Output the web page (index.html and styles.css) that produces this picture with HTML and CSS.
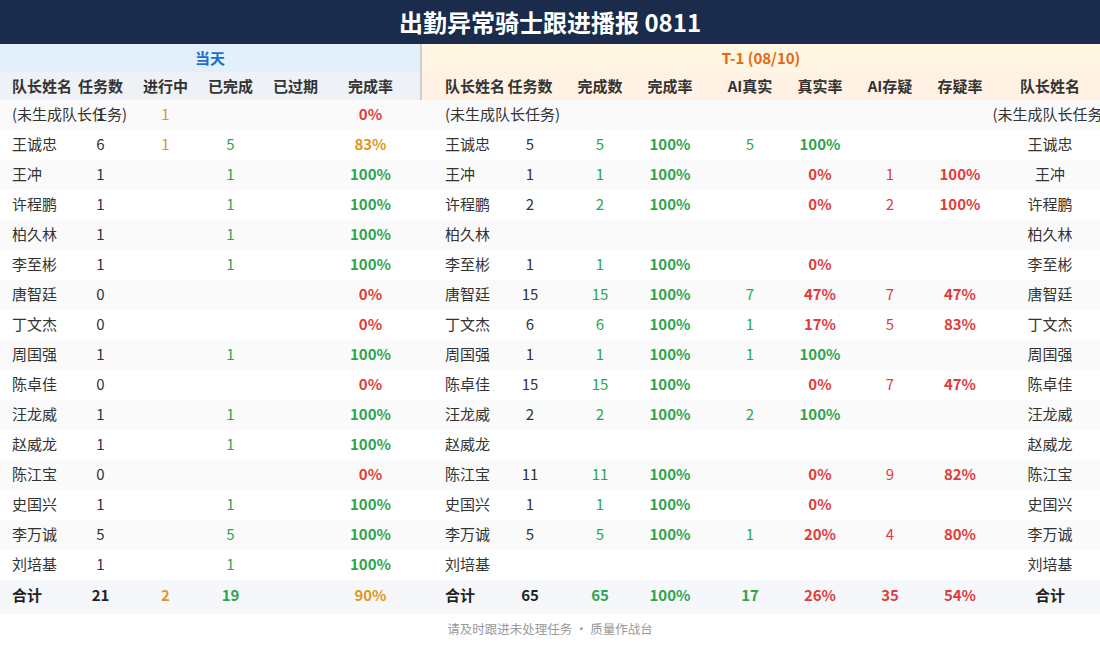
FILE: index.html
```html
<!DOCTYPE html>
<html lang="zh-CN">
<head>
<meta charset="utf-8">
<title>出勤异常骑士跟进播报 0811</title>
<link rel="stylesheet" href="styles.css">
</head>
<body>
<div class="board">
  <header class="title">出勤异常骑士跟进播报 0811</header>

  <div class="group">
    <div class="g-today">当天</div>
    <div class="g-prev">T-1 (08/10)</div>
  </div>

  <div class="row head">
    <span class="c nm">队长姓名</span><span class="c">任务数</span><span class="c">进行中</span><span class="c">已完成</span><span class="c">已过期</span><span class="c rate">完成率</span>
    <span class="c nm2 div">队长姓名</span><span class="c">任务数</span><span class="c">完成数</span><span class="c">完成率</span><span class="c">AI真实</span><span class="c">真实率</span><span class="c">AI存疑</span><span class="c">存疑率</span><span class="c">队长姓名</span>
  </div>

  <div class="row">
    <span class="c nm">(未生成队长任务)</span><span class="c">1</span><span class="c o">1</span><span class="c"></span><span class="c"></span><span class="c rate b r">0%</span>
    <span class="c nm2">(未生成队长任务)</span><span class="c"></span><span class="c"></span><span class="c"></span><span class="c"></span><span class="c"></span><span class="c"></span><span class="c"></span><span class="c">(未生成队长任务)</span>
  </div>
  <div class="row">
    <span class="c nm">王诚忠</span><span class="c">6</span><span class="c o">1</span><span class="c g">5</span><span class="c"></span><span class="c rate b o">83%</span>
    <span class="c nm2">王诚忠</span><span class="c">5</span><span class="c g">5</span><span class="c b g">100%</span><span class="c g">5</span><span class="c b g">100%</span><span class="c"></span><span class="c"></span><span class="c">王诚忠</span>
  </div>
  <div class="row">
    <span class="c nm">王冲</span><span class="c">1</span><span class="c"></span><span class="c g">1</span><span class="c"></span><span class="c rate b g">100%</span>
    <span class="c nm2">王冲</span><span class="c">1</span><span class="c g">1</span><span class="c b g">100%</span><span class="c"></span><span class="c b r">0%</span><span class="c r">1</span><span class="c b r">100%</span><span class="c">王冲</span>
  </div>
  <div class="row">
    <span class="c nm">许程鹏</span><span class="c">1</span><span class="c"></span><span class="c g">1</span><span class="c"></span><span class="c rate b g">100%</span>
    <span class="c nm2">许程鹏</span><span class="c">2</span><span class="c g">2</span><span class="c b g">100%</span><span class="c"></span><span class="c b r">0%</span><span class="c r">2</span><span class="c b r">100%</span><span class="c">许程鹏</span>
  </div>
  <div class="row">
    <span class="c nm">柏久林</span><span class="c">1</span><span class="c"></span><span class="c g">1</span><span class="c"></span><span class="c rate b g">100%</span>
    <span class="c nm2">柏久林</span><span class="c"></span><span class="c"></span><span class="c"></span><span class="c"></span><span class="c"></span><span class="c"></span><span class="c"></span><span class="c">柏久林</span>
  </div>
  <div class="row">
    <span class="c nm">李至彬</span><span class="c">1</span><span class="c"></span><span class="c g">1</span><span class="c"></span><span class="c rate b g">100%</span>
    <span class="c nm2">李至彬</span><span class="c">1</span><span class="c g">1</span><span class="c b g">100%</span><span class="c"></span><span class="c b r">0%</span><span class="c"></span><span class="c"></span><span class="c">李至彬</span>
  </div>
  <div class="row">
    <span class="c nm">唐智廷</span><span class="c">0</span><span class="c"></span><span class="c"></span><span class="c"></span><span class="c rate b r">0%</span>
    <span class="c nm2">唐智廷</span><span class="c">15</span><span class="c g">15</span><span class="c b g">100%</span><span class="c g">7</span><span class="c b r">47%</span><span class="c r">7</span><span class="c b r">47%</span><span class="c">唐智廷</span>
  </div>
  <div class="row">
    <span class="c nm">丁文杰</span><span class="c">0</span><span class="c"></span><span class="c"></span><span class="c"></span><span class="c rate b r">0%</span>
    <span class="c nm2">丁文杰</span><span class="c">6</span><span class="c g">6</span><span class="c b g">100%</span><span class="c g">1</span><span class="c b r">17%</span><span class="c r">5</span><span class="c b r">83%</span><span class="c">丁文杰</span>
  </div>
  <div class="row">
    <span class="c nm">周国强</span><span class="c">1</span><span class="c"></span><span class="c g">1</span><span class="c"></span><span class="c rate b g">100%</span>
    <span class="c nm2">周国强</span><span class="c">1</span><span class="c g">1</span><span class="c b g">100%</span><span class="c g">1</span><span class="c b g">100%</span><span class="c"></span><span class="c"></span><span class="c">周国强</span>
  </div>
  <div class="row">
    <span class="c nm">陈卓佳</span><span class="c">0</span><span class="c"></span><span class="c"></span><span class="c"></span><span class="c rate b r">0%</span>
    <span class="c nm2">陈卓佳</span><span class="c">15</span><span class="c g">15</span><span class="c b g">100%</span><span class="c"></span><span class="c b r">0%</span><span class="c r">7</span><span class="c b r">47%</span><span class="c">陈卓佳</span>
  </div>
  <div class="row">
    <span class="c nm">汪龙威</span><span class="c">1</span><span class="c"></span><span class="c g">1</span><span class="c"></span><span class="c rate b g">100%</span>
    <span class="c nm2">汪龙威</span><span class="c">2</span><span class="c g">2</span><span class="c b g">100%</span><span class="c g">2</span><span class="c b g">100%</span><span class="c"></span><span class="c"></span><span class="c">汪龙威</span>
  </div>
  <div class="row">
    <span class="c nm">赵威龙</span><span class="c">1</span><span class="c"></span><span class="c g">1</span><span class="c"></span><span class="c rate b g">100%</span>
    <span class="c nm2">赵威龙</span><span class="c"></span><span class="c"></span><span class="c"></span><span class="c"></span><span class="c"></span><span class="c"></span><span class="c"></span><span class="c">赵威龙</span>
  </div>
  <div class="row">
    <span class="c nm">陈江宝</span><span class="c">0</span><span class="c"></span><span class="c"></span><span class="c"></span><span class="c rate b r">0%</span>
    <span class="c nm2">陈江宝</span><span class="c">11</span><span class="c g">11</span><span class="c b g">100%</span><span class="c"></span><span class="c b r">0%</span><span class="c r">9</span><span class="c b r">82%</span><span class="c">陈江宝</span>
  </div>
  <div class="row">
    <span class="c nm">史国兴</span><span class="c">1</span><span class="c"></span><span class="c g">1</span><span class="c"></span><span class="c rate b g">100%</span>
    <span class="c nm2">史国兴</span><span class="c">1</span><span class="c g">1</span><span class="c b g">100%</span><span class="c"></span><span class="c b r">0%</span><span class="c"></span><span class="c"></span><span class="c">史国兴</span>
  </div>
  <div class="row">
    <span class="c nm">李万诚</span><span class="c">5</span><span class="c"></span><span class="c g">5</span><span class="c"></span><span class="c rate b g">100%</span>
    <span class="c nm2">李万诚</span><span class="c">5</span><span class="c g">5</span><span class="c b g">100%</span><span class="c g">1</span><span class="c b r">20%</span><span class="c r">4</span><span class="c b r">80%</span><span class="c">李万诚</span>
  </div>
  <div class="row">
    <span class="c nm">刘培基</span><span class="c">1</span><span class="c"></span><span class="c g">1</span><span class="c"></span><span class="c rate b g">100%</span>
    <span class="c nm2">刘培基</span><span class="c"></span><span class="c"></span><span class="c"></span><span class="c"></span><span class="c"></span><span class="c"></span><span class="c"></span><span class="c">刘培基</span>
  </div>

  <div class="row total">
    <span class="c nm">合计</span><span class="c">21</span><span class="c o">2</span><span class="c g">19</span><span class="c"></span><span class="c rate o">90%</span>
    <span class="c nm2">合计</span><span class="c">65</span><span class="c g">65</span><span class="c g">100%</span><span class="c g">17</span><span class="c r">26%</span><span class="c r">35</span><span class="c r">54%</span><span class="c">合计</span>
  </div>

  <footer class="foot">请及时跟进未处理任务 · 质量作战台</footer>
</div>
</body>
</html>
```

FILE: styles.css
```css
html, body {
  margin: 0;
  padding: 0;
  overflow: hidden;
  background: #ffffff;
}

.board {
  width: 1100px;
  overflow: hidden;
  font-family: "Noto Sans CJK SC", "Noto Sans", sans-serif;
  color: #333333;
  font-size: 15px;
}

.title {
  height: 44px;
  line-height: 44px;
  background: #1a2b4b;
  color: #ffffff;
  font-size: 24px;
  font-weight: 700;
  text-align: center;
}

.group {
  display: grid;
  grid-template-columns: 420px 680px;
  height: 28px;
  line-height: 28px;
  font-size: 15px;
  font-weight: 700;
  text-align: center;
}

.g-today {
  background: #e3f0fc;
  color: #1b6fcf;
}

.g-prev {
  background: #fff7e3;
  color: #e8670e;
  border-left: 2px solid #cfcfcf;
}

.row {
  display: grid;
  grid-template-columns: 68px 65px 65px 65px 65px 92px 70px 80px 60px 80px 80px 60px 80px 60px 120px;
  height: 30px;
  line-height: 28px;
  white-space: nowrap;
}

.row:nth-of-type(odd) {
  background: #fafafa;
}

.row:nth-of-type(even) {
  background: #ffffff;
}

.c {
  display: block;
  text-align: center;
  overflow: visible;
  white-space: nowrap;
}

.c.nm {
  text-align: left;
  padding-left: 12px;
}

.c.nm2 {
  text-align: left;
  padding-left: 25px;
}

.c.rate {
  padding-right: 7px;
}

.row.head {
  height: 28px;
  line-height: 28px;
  font-weight: 700;
  color: #333333;
  background: linear-gradient(to right, #eef1f6 0, #eef1f6 420px, #fff2e4 420px, #fff2e4 100%);
}

.c.div {
  border-left: 2px solid #cfcfcf;
  padding-left: 23px;
}

.b {
  font-weight: 700;
}

.g {
  color: #2da44e;
}

.o {
  color: #e3961c;
}

.r {
  color: #e03c3c;
}

.row.total {
  height: 34px;
  line-height: 30px;
  background: #f5f7fa;
  font-weight: 700;
  color: #222222;
}

.foot {
  height: 32px;
  line-height: 30px;
  text-align: center;
  font-size: 12.5px;
  color: #999999;
}
```
